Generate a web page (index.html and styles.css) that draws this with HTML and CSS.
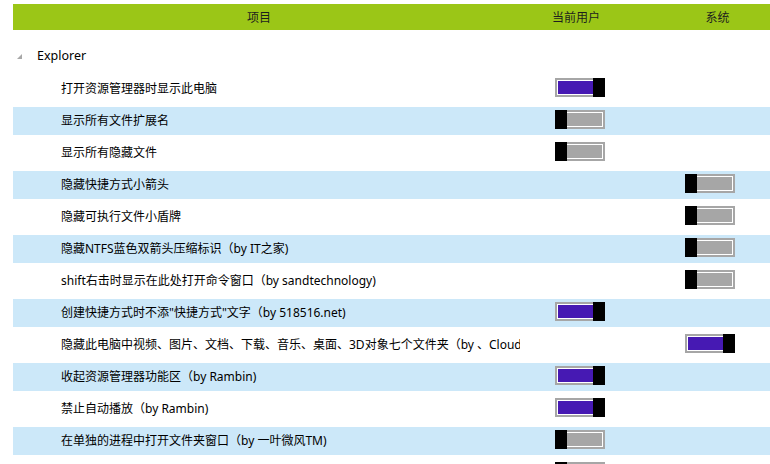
FILE: index.html
```html
<!DOCTYPE html>
<html lang="zh-CN">
<head>
  <meta charset="UTF-8" />
  <title>设置</title>
  <link rel="stylesheet" href="styles.css">
</head>
<body>
  <div class="header">
    <div class="col-name">项目</div>
    <div class="col-user">当前用户</div>
    <div class="col-sys">系统</div>
  </div>

  <div class="group">
    <span class="arrow"></span>
    <span>Explorer</span>
  </div>

  <div class="list">
    <div class="row">
      <div class="name">打开资源管理器时显示此电脑</div>
      <div class="cell-user"><div class="switch on"><div class="track"></div><div class="knob"></div></div></div>
      <div class="cell-sys"></div>
    </div>
    <div class="row alt">
      <div class="name">显示所有文件扩展名</div>
      <div class="cell-user"><div class="switch"><div class="knob"></div><div class="track"></div></div></div>
      <div class="cell-sys"></div>
    </div>
    <div class="row">
      <div class="name">显示所有隐藏文件</div>
      <div class="cell-user"><div class="switch"><div class="knob"></div><div class="track"></div></div></div>
      <div class="cell-sys"></div>
    </div>
    <div class="row alt">
      <div class="name">隐藏快捷方式小箭头</div>
      <div class="cell-user"></div>
      <div class="cell-sys"><div class="switch"><div class="knob"></div><div class="track"></div></div></div>
    </div>
    <div class="row">
      <div class="name">隐藏可执行文件小盾牌</div>
      <div class="cell-user"></div>
      <div class="cell-sys"><div class="switch"><div class="knob"></div><div class="track"></div></div></div>
    </div>
    <div class="row alt">
      <div class="name">隐藏NTFS蓝色双箭头压缩标识（by IT之家)</div>
      <div class="cell-user"></div>
      <div class="cell-sys"><div class="switch"><div class="knob"></div><div class="track"></div></div></div>
    </div>
    <div class="row">
      <div class="name">shift右击时显示在此处打开命令窗口（by sandtechnology)</div>
      <div class="cell-user"></div>
      <div class="cell-sys"><div class="switch"><div class="knob"></div><div class="track"></div></div></div>
    </div>
    <div class="row alt">
      <div class="name">创建快捷方式时不添"快捷方式"文字（by 518516.net)</div>
      <div class="cell-user"><div class="switch on"><div class="track"></div><div class="knob"></div></div></div>
      <div class="cell-sys"></div>
    </div>
    <div class="row">
      <div class="name">隐藏此电脑中视频、图片、文档、下载、音乐、桌面、3D对象七个文件夹（by 、Cloud)</div>
      <div class="cell-user"></div>
      <div class="cell-sys"><div class="switch on"><div class="track"></div><div class="knob"></div></div></div>
    </div>
    <div class="row alt">
      <div class="name">收起资源管理器功能区（by Rambin)</div>
      <div class="cell-user"><div class="switch on"><div class="track"></div><div class="knob"></div></div></div>
      <div class="cell-sys"></div>
    </div>
    <div class="row">
      <div class="name">禁止自动播放（by Rambin)</div>
      <div class="cell-user"><div class="switch on"><div class="track"></div><div class="knob"></div></div></div>
      <div class="cell-sys"></div>
    </div>
    <div class="row alt">
      <div class="name">在单独的进程中打开文件夹窗口（by 一叶微风TM)</div>
      <div class="cell-user"><div class="switch"><div class="knob"></div><div class="track"></div></div></div>
      <div class="cell-sys"></div>
    </div>
    <div class="row">
      <div class="name">显示完整路径</div>
      <div class="cell-user"><div class="switch"><div class="knob"></div><div class="track"></div></div></div>
      <div class="cell-sys"></div>
    </div>
  </div>
</body>
</html>
```

FILE: styles.css
```css
body {
  margin: 0;
  padding: 4px 0 0 13px;
  font-family: "Noto Sans", "Noto Sans CJK SC", sans-serif;
  font-size: 12px;
  color: #000;
  background-color: #fff;
  overflow: hidden;
  height: 464px;
  box-sizing: border-box;
}
.header {
  display: grid;
  grid-template-columns: 492px 142px 141px;
  height: 26px;
  align-items: center;
  background-color: #9bc617;
  color: #1e1e1e;
  text-align: center;
}
.group {
  display: flex;
  align-items: center;
  height: 40px;
  margin-top: 5px;
  padding-left: 4px;
  font-size: 12.5px;
}
.arrow {
  width: 0;
  height: 0;
  border-left: 5px solid transparent;
  border-bottom: 5px solid #a8a8a8;
  margin-right: 15px;
  margin-top: 2px;
}
.list {
  display: flex;
  flex-direction: column;
  gap: 4px;
}
.row {
  display: grid;
  grid-template-columns: 507px 120px 130px;
  height: 28px;
  flex-shrink: 0;
}
.row.alt {
  background-color: #cce8f9;
}
.name {
  padding-left: 48px;
  line-height: 28px;
  white-space: nowrap;
  overflow: hidden;
}
.cell-user {
  padding: 3px 0 0 35px;
}
.cell-sys {
  padding: 3px 0 0 45px;
}
.switch {
  display: flex;
  width: 50px;
  height: 19px;
}
.knob {
  width: 12px;
  background-color: #000;
}
.track {
  flex: 1;
  background-color: #a6a6a6;
  border: 2px solid #a6a6a6;
  box-shadow: inset 0 0 0 1px #fff;
}
.switch .knob + .track {
  border-left: none;
  box-shadow: inset 0 1px 0 #fff, inset -1px 0 0 #fff, inset 0 -1px 0 #fff;
}
.switch.on .track {
  background-color: #4619b3;
  border-right: none;
  box-shadow: inset 0 1px 0 #fff, inset 1px 0 0 #fff, inset 0 -1px 0 #fff;
}
```
